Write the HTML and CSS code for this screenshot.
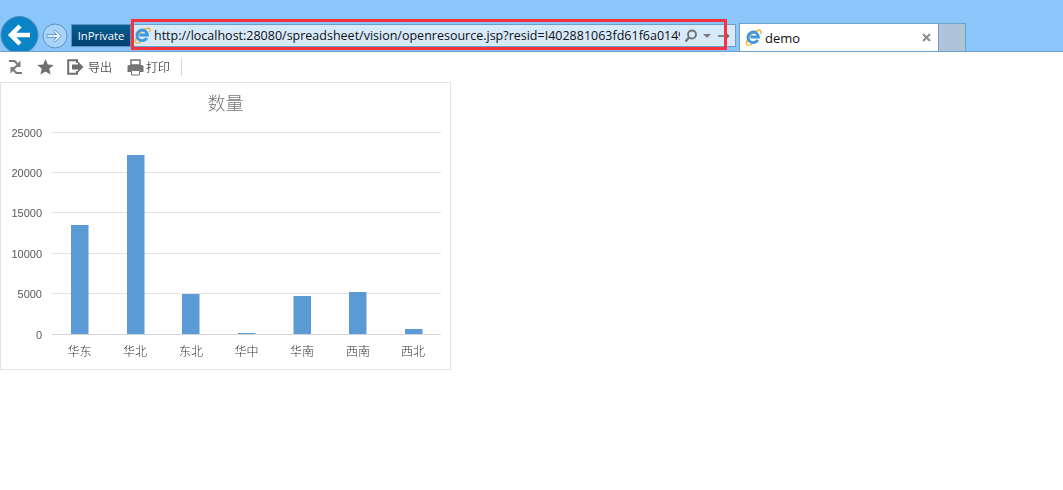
FILE: index.html
```html
<!DOCTYPE html>
<html lang="zh">
<head>
<meta charset="utf-8">
<title>demo</title>
<link rel="stylesheet" href="styles.css">
</head>
<body>
<header class="chrome">
  <svg class="back" width="39" height="37" viewBox="0 0 39 37">
    <circle cx="19.500" cy="20" r="18.500" fill="#0a84c6" stroke="#4d87b5" stroke-width="1"/>
    <path d="M30 20H12M20 11l-9 9 9 9" fill="none" stroke="#fff" stroke-width="4.500"/>
  </svg>
  <svg class="forward" width="26" height="26" viewBox="0 0 26 26">
    <circle cx="13" cy="13" r="12" fill="#a9d4fa" stroke="#5f93c2"/>
    <path d="M5 11.500h9.500l-3-3L13 7l6.500 6-6.500 6-1.500-1.500 3-3H5z" fill="#dcedfc" stroke="#6d9cc6" stroke-width="1"/>
  </svg>
  <div class="inprivate">InPrivate</div>
  <div class="address">
    <svg class="ie" width="17" height="17" viewBox="0 0 17 17">
      <path d="M1.500 15.500C1 10 7 2.500 15 1c1.500 1 1 3 .5 4" fill="none" stroke="#f0b11c" stroke-width="1.300"/>
      <path d="M12.800 11A5.300 5.300 0 1 1 13.500 8H5.500" fill="none" stroke="#3a97e0" stroke-width="2.800"/>
      <path d="M1.500 15.500c1.500 1 3.500.8 5.500-.3" fill="none" stroke="#f0b11c" stroke-width="1.200"/>
    </svg>
    <span class="url">http://localhost:28080/spreadsheet/vision/openresource.jsp?resid=I402881063fd61f6a0149</span>
    <svg class="search" width="14" height="14" viewBox="0 0 14 14">
      <circle cx="8" cy="5.500" r="4" fill="none" stroke="#6e6e6e" stroke-width="1.800"/>
      <path d="M5 8.500L1.500 12.500" stroke="#6e6e6e" stroke-width="2.200"/>
    </svg>
    <svg class="caret" width="8" height="4" viewBox="0 0 8 4"><path d="M0 0h8L4 4z" fill="#7a7a7a"/></svg>
    <svg class="go" width="12" height="10" viewBox="0 0 12 10">
      <path d="M0 5h10M7 1.500L10.500 5 7 8.500" fill="none" stroke="#666" stroke-width="1.600"/>
    </svg>
  </div>
  <div class="tab">
    <svg class="ie" width="17" height="17" viewBox="0 0 17 17">
      <path d="M1.500 15.500C1 10 7 2.500 15 1c1.500 1 1 3 .5 4" fill="none" stroke="#f0b11c" stroke-width="1.300"/>
      <path d="M12.800 11A5.300 5.300 0 1 1 13.500 8H5.500" fill="none" stroke="#3a97e0" stroke-width="2.800"/>
      <path d="M1.500 15.500c1.500 1 3.500.8 5.500-.3" fill="none" stroke="#f0b11c" stroke-width="1.200"/>
    </svg>
    <span class="tab-title">demo</span>
    <svg class="close" width="9" height="9" viewBox="0 0 9 9"><path d="M1 1l7 7M8 1L1 8" stroke="#8d8d8d" stroke-width="2"/></svg>
  </div>
  <div class="new-tab"></div>
  <div class="highlight"></div>
</header>

<nav class="toolbar">
  <svg class="tool-refresh" width="15" height="16" viewBox="0 0 15 16">
    <path d="M1 1h6l3 3 2.500-2.500V8H6l2.500-2.500L6 3H1z" fill="#7b7b7b"/>
    <path d="M14 15H8l-3-3-2.500 2.500V8H9l-2.500 2.500L9 13h5z" fill="#7b7b7b"/>
  </svg>
  <svg class="tool-star" width="17" height="16" viewBox="0 0 17 16">
    <path d="M8.500 0l2.300 5.500 5.900.5-4.500 3.800 1.400 5.800-5.100-3.100-5.100 3.100 1.400-5.800L.3 6l5.900-.5z" fill="#6f6f6f"/>
  </svg>
  <button class="tool-btn tool-export">
    <svg width="17" height="16" viewBox="0 0 17 16">
      <path d="M10 4V1.200H1.200v13.600H10V12" fill="none" stroke="#6f6f6f" stroke-width="2"/>
      <path d="M5 5.500h6V2.500L16.500 8 11 13.500V10.500H5z" fill="#6f6f6f"/>
    </svg>
    <span>导出</span>
  </button>
  <button class="tool-btn tool-print">
    <svg width="17" height="17" viewBox="0 0 17 17">
      <path d="M4 1h9v5H4z" fill="#fff" stroke="#747474" stroke-width="1.500"/>
      <path d="M2 6h13a1.500 1.500 0 0 1 1.500 1.500V13H13v-2H4v2H.5V7.500A1.500 1.500 0 0 1 2 6z" fill="#747474"/>
      <path d="M4.500 11.500h8v4.500h-8z" fill="#fff" stroke="#747474"/>
    </svg>
    <span>打印</span>
  </button>
  <div class="tool-sep"></div>
</nav>

<main class="chart-card">
  <svg class="chart" width="449" height="286" viewBox="1 83 449 286">
    <text class="chart-title" x="225.500" y="110">数量</text>
    <g class="grid">
      <line x1="52" x2="441" y1="132.500" y2="132.500"/>
      <line x1="52" x2="441" y1="172.500" y2="172.500"/>
      <line x1="52" x2="441" y1="212.500" y2="212.500"/>
      <line x1="52" x2="441" y1="253.500" y2="253.500"/>
      <line x1="52" x2="441" y1="293.500" y2="293.500"/>
      <line class="axis" x1="52" x2="441" y1="334.500" y2="334.500"/>
    </g>
    <g class="y-labels">
      <text x="42" y="137">25000</text>
      <text x="42" y="177">20000</text>
      <text x="42" y="217">15000</text>
      <text x="42" y="258">10000</text>
      <text x="42" y="298">5000</text>
      <text x="42" y="339">0</text>
    </g>
    <g class="bars">
      <rect x="71" y="225" width="17.500" height="109"/>
      <rect x="127" y="155" width="17.500" height="179"/>
      <rect x="182" y="294" width="17.500" height="40"/>
      <rect x="238" y="333" width="17.500" height="1"/>
      <rect x="293.500" y="296" width="17.500" height="38"/>
      <rect x="349" y="292" width="17.500" height="42"/>
      <rect x="405" y="329" width="17.500" height="5"/>
    </g>
    <g class="x-labels">
      <text x="79.500" y="356">华东</text>
      <text x="135" y="356">华北</text>
      <text x="191" y="356">东北</text>
      <text x="246.500" y="356">华中</text>
      <text x="302" y="356">华南</text>
      <text x="358" y="356">西南</text>
      <text x="413" y="356">西北</text>
    </g>
  </svg>
</main>
</body>
</html>
```
FILE: styles.css
```css
* { box-sizing: border-box; }
html, body { margin: 0; padding: 0; background: #fff; overflow: hidden; }
body { width: 1063px; height: 490px; font-family: "Liberation Sans", "Noto Sans CJK SC", sans-serif; }

.chrome {
  position: relative;
  display: flex;
  align-items: flex-end;
  height: 52px;
  background: #8bc6fa;
  border-bottom: 1px solid #6d9fcb;
  overflow: hidden;
}
.back { flex: none; margin-bottom: -1px; }
.forward { flex: none; margin: 0 0 2px 3px; }
.inprivate {
  flex: none;
  width: 60px;
  height: 23px;
  margin: 0 0 4px 3px;
  background: linear-gradient(#0a5f94, #02406f);
  border: 1px solid #5f93c2;
  color: #fff;
  font: 11.300px/21px "Open Sans", "Liberation Sans", sans-serif;
  text-align: center;
}
.address {
  flex: none;
  display: flex;
  align-items: center;
  width: 604px;
  height: 23px;
  margin: 0 0 4px 1px;
  padding: 0 3px 0 1px;
  background: #d6eafc;
  border: 1px solid #6d9fcb;
}
.url {
  flex: none;
  width: 526px;
  margin-left: 3px;
  overflow: hidden;
  white-space: nowrap;
  color: #111;
  font: 12.500px/20px "Open Sans", "Liberation Sans", sans-serif;
}
.search { flex: none; margin-left: 4px; }
.caret { flex: none; margin-left: 5px; }
.go { flex: none; margin-left: 7px; }
.tab {
  flex: none;
  display: flex;
  align-items: center;
  width: 200px;
  height: 28px;
  margin-left: 3px;
  padding: 0 7px 0 5px;
  background: #fff;
  border: 1px solid #6d9fcb;
  border-bottom: 0;
}
.tab-title {
  flex: 1;
  margin-left: 3px;
  color: #111;
  font: 13px/20px "Open Sans", "Liberation Sans", sans-serif;
}
.new-tab {
  flex: none;
  width: 27px;
  height: 28px;
  background: #aec4d8;
  border: 1px solid #6d9fcb;
  border-left: 0;
  border-bottom: 0;
}
.highlight {
  position: absolute;
  left: 131px;
  top: 19px;
  width: 596px;
  height: 31px;
  border: 3px solid #f5333f;
}

.toolbar {
  display: flex;
  align-items: center;
  height: 30px;
  padding-left: 8px;
  will-change: transform;
}
.tool-star { margin-left: 14px; }
.tool-btn {
  display: flex;
  align-items: center;
  gap: 4px;
  padding: 0;
  border: 0;
  background: none;
  color: #000;
  font: 300 12px/16px "Noto Sans CJK SC", sans-serif;
}
.tool-export { margin-left: 13px; }
.tool-print { margin-left: 15px; gap: 2px; }
.tool-sep { width: 1px; height: 17px; margin-left: 11px; background: #d6d6d6; }

.chart-card {
  width: 451px;
  height: 288px;
  border: 1px solid #e3e3e3;
}
.chart { display: block; will-change: transform; }
.chart-title {
  fill: #777;
  font: 300 18px "Noto Sans CJK SC", sans-serif;
  text-anchor: middle;
}
.grid line { stroke: #e4e4e4; stroke-width: 1; }
.grid .axis { stroke: #d4d4d4; }
.y-labels text {
  fill: #595959;
  font: 11px "Liberation Sans", sans-serif;
  text-anchor: end;
}
.bars rect { fill: #5b9bd5; }
.x-labels text {
  fill: #333;
  font: 300 12px "Noto Sans CJK SC", sans-serif;
  text-anchor: middle;
}
```
